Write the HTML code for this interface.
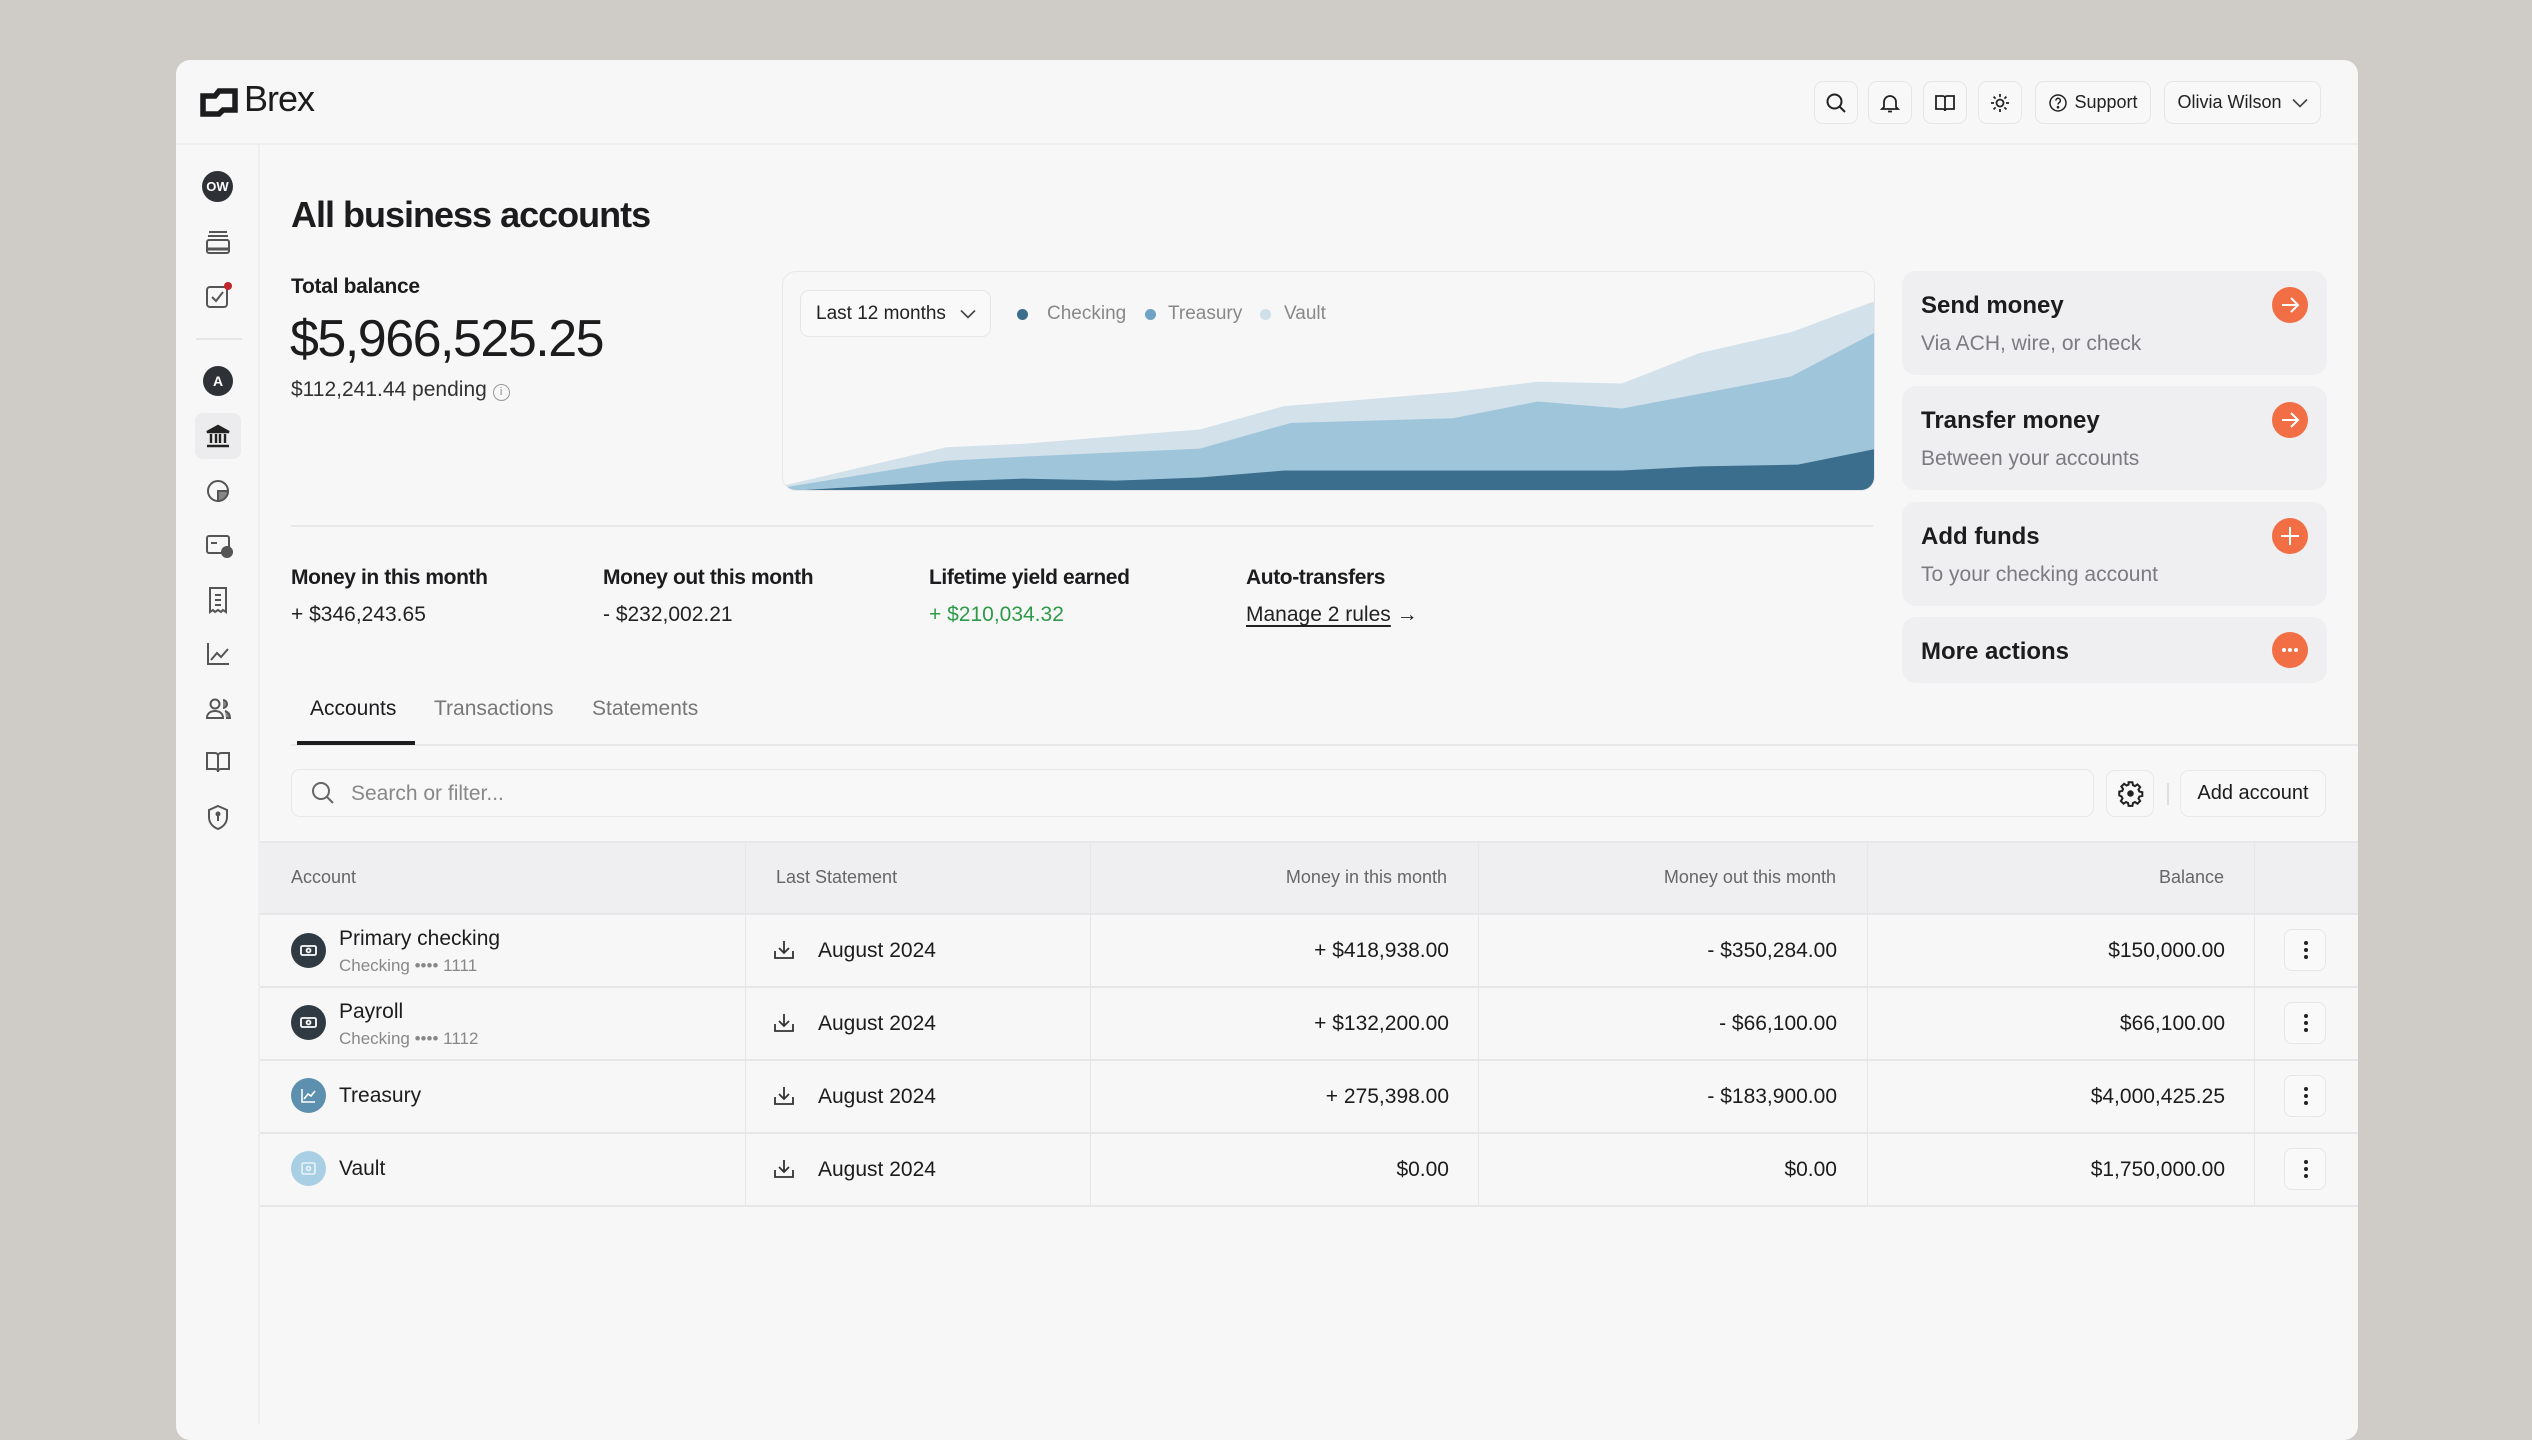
<!DOCTYPE html>
<html><head><meta charset="utf-8"><style>
*{margin:0;padding:0;box-sizing:border-box}
body{width:2532px;height:1424px;overflow:hidden;background:#cfcbc6;font-family:"Liberation Sans",sans-serif;color:#1c1c1e;position:relative}
.a{position:absolute}
.win{left:176px;top:60px;width:2182px;height:1380px;background:#f7f7f7;border-radius:14px;overflow:hidden}
.t{position:absolute;white-space:nowrap}
.hb{position:absolute;top:81px;height:43px;border:1.5px solid #e6e6e8;border-radius:9px;background:#f8f8f8;display:flex;align-items:center;justify-content:center;font-size:18px;color:#222}
.card{position:absolute;left:1902px;width:425px;background:#efeff1;border-radius:14px}
.card .h{position:absolute;left:19px;font-size:24px;font-weight:bold;color:#1c1c1e}
.card .s{position:absolute;left:19px;font-size:21px;color:#7b7b80}
.oc{position:absolute;left:2272px;width:36px;height:36px;border-radius:50%;background:#f26e45}
.col{position:absolute;top:841px;height:364px;border-left:1.5px solid #e7e7e9}
.row{position:absolute;left:260px;width:2098px;height:1.5px;background:#e7e7e9}
.rt{position:absolute;font-size:21px;color:#1c1c1e;white-space:nowrap}
.rr{position:absolute;font-size:21px;color:#1c1c1e;text-align:right;white-space:nowrap}
.keb{position:absolute;left:2284px;width:42px;height:42px;border:1.5px solid #e6e6e8;border-radius:8px;background:#f9f9f9}
.keb i{position:absolute;left:19px;width:4px;height:4px;border-radius:2px;background:#222}
.ic{position:absolute;left:291px;width:35px;height:35px;border-radius:50%}
.si{position:absolute;left:204px}
</style></head><body>
<div class="a win"></div>
<div class="a" style="left:176px;top:143px;width:2182px;height:2px;background:#efefef"></div>
<div class="a" style="left:258px;top:145px;width:2px;height:1279px;background:#efefef"></div>

<!-- logo -->
<svg class="a" style="left:199px;top:86px" width="40" height="32" viewBox="0 0 40 32"><path d="M4 10H16L20 5H36V24H24L20 28H4Z" fill="none" stroke="#1c1c1e" stroke-width="5.5" stroke-linejoin="miter"/></svg>
<div class="t" style="left:244px;top:78px;font-size:36px;font-weight:500;letter-spacing:-1px">Brex</div>

<div class="hb" style="left:1814px;width:44px"><svg width="24" height="24" viewBox="0 0 24 24" fill="none" stroke="#222" stroke-width="2"><circle cx="10.5" cy="10.5" r="7"/><path d="M16 16l5 5"/></svg></div>
<div class="hb" style="left:1868px;width:44px"><svg width="24" height="24" viewBox="0 0 24 24" fill="none" stroke="#222" stroke-width="1.8"><path d="M6 16V11a6 6 0 0112 0v5l2 2H4z"/><path d="M10 20.5h4"/></svg></div>
<div class="hb" style="left:1923px;width:44px"><svg width="24" height="24" viewBox="0 0 24 24" fill="none" stroke="#222" stroke-width="1.8"><path d="M3 5h7a2 2 0 012 2v13a2 2 0 00-2-2H3zM21 5h-7a2 2 0 00-2 2v13a2 2 0 012-2h7z"/></svg></div>
<div class="hb" style="left:1978px;width:44px"><svg width="24" height="24" viewBox="0 0 24 24" fill="none" stroke="#222" stroke-width="1.8"><circle cx="12" cy="12" r="3.5"/><path d="M12 3v3M12 18v3M3 12h3M18 12h3M5.6 5.6l2 2M16.4 16.4l2 2M5.6 18.4l2-2M16.4 7.6l2-2"/></svg></div>
<div class="hb" style="left:2035px;width:116px;gap:6px"><svg width="20" height="20" viewBox="0 0 20 20" fill="none" stroke="#222" stroke-width="1.5"><circle cx="10" cy="10" r="8"/><path d="M7.8 7.6a2.3 2.3 0 114 1.5c-.9.7-1.8 1.1-1.8 2.4"/><circle cx="10" cy="14.2" r=".6" fill="#222"/></svg>Support</div>
<div class="hb" style="left:2164px;width:157px;gap:10px">Olivia Wilson <svg width="16" height="10" viewBox="0 0 16 10" fill="none" stroke="#444" stroke-width="1.6"><path d="M1 1.5l7 7 7-7"/></svg></div>

<!-- sidebar -->
<div class="a" style="left:202px;top:171px;width:31px;height:31px;border-radius:50%;background:#2e3236;color:#fff;font-size:13px;font-weight:bold;text-align:center;line-height:31px">OW</div>
<svg class="si" style="top:229px" width="28" height="26" viewBox="0 0 28 26" fill="none" stroke="#555" stroke-width="2"><path d="M5 3h18M4 7h20"/><rect x="3" y="11" width="22" height="13" rx="2"/><path d="M3 20h22" stroke-width="3"/></svg>
<svg class="si" style="top:281px" width="30" height="30" viewBox="0 0 30 30" fill="none" stroke="#555" stroke-width="2"><rect x="3" y="6" width="20" height="20" rx="3"/><path d="M8 16l4 4 7-9"/><circle cx="24" cy="5" r="4" fill="#c0262b" stroke="none"/></svg>
<div class="a" style="left:196px;top:338px;width:46px;height:2px;background:#e6e6e6"></div>
<div class="a" style="left:203px;top:366px;width:30px;height:30px;border-radius:50%;background:#2e3236;color:#fff;font-size:14px;font-weight:bold;text-align:center;line-height:30px">A</div>
<div class="a" style="left:195px;top:413px;width:46px;height:46px;border-radius:8px;background:#ececee"></div>
<svg class="si" style="top:423px" width="28" height="26" viewBox="0 0 28 26" fill="none" stroke="#222" stroke-width="2.4"><path d="M3 9L14 3l11 6z" fill="#222"/><path d="M7 11v9M12 11v9M16 11v9M21 11v9M3 23h22" /></svg>
<svg class="si" style="top:477px" width="28" height="28" viewBox="0 0 28 28" fill="none" stroke="#555" stroke-width="2"><circle cx="14" cy="14" r="10"/><path d="M14 14h10a10 10 0 01-10 10z" fill="#888"/></svg>
<svg class="si" style="top:532px" width="30" height="28" viewBox="0 0 30 28" fill="none" stroke="#555" stroke-width="2"><rect x="3" y="4" width="22" height="17" rx="2"/><path d="M7 11h6"/><circle cx="23" cy="20" r="5" fill="#555"/></svg>
<svg class="si" style="top:585px" width="28" height="30" viewBox="0 0 28 30" fill="none" stroke="#555" stroke-width="2"><path d="M6 3h16v24l-3-2-2 2-3-2-3 2-2-2-3 2z"/><path d="M11 10h6M11 15h6M11 20h6"/></svg>
<svg class="si" style="top:640px" width="28" height="28" viewBox="0 0 28 28" fill="none" stroke="#555" stroke-width="2"><path d="M4 3v21h21"/><path d="M7 20l6-7 4 4 7-8"/></svg>
<svg class="si" style="top:695px" width="30" height="28" viewBox="0 0 30 28" fill="none" stroke="#555" stroke-width="2"><circle cx="11" cy="9" r="4.5"/><path d="M3 23c0-5 4-7 8-7s8 2 8 7z"/><path d="M19 5a4 4 0 010 8M21 16c3 1 5 3 5 7h-4" fill="#888"/></svg>
<svg class="si" style="top:749px" width="28" height="26" viewBox="0 0 28 26" fill="none" stroke="#555" stroke-width="2"><path d="M3 4h8a3 3 0 013 3v16a3 3 0 00-3-3H3zM25 4h-8a3 3 0 00-3 3v16a3 3 0 013-3h8z"/></svg>
<svg class="si" style="top:803px" width="28" height="28" viewBox="0 0 28 28" fill="none" stroke="#555" stroke-width="2"><path d="M14 3l9 4v7c0 6-4 10-9 12-5-2-9-6-9-12V7z"/><path d="M14 11v7"/><circle cx="14" cy="11" r="1.5" fill="#555"/></svg>

<!-- title -->
<div class="t" style="left:291px;top:194px;font-size:36px;font-weight:bold;letter-spacing:-1px">All business accounts</div>
<div class="t" style="left:291px;top:275px;font-size:21px;font-weight:bold;letter-spacing:-0.3px">Total balance</div>
<div class="t" style="left:290px;top:309px;font-size:52px;font-weight:500;letter-spacing:-1.5px">$5,966,525.25</div>
<div class="t" style="left:291px;top:378px;font-size:21px;color:#333">$112,241.44 pending <span style="display:inline-block;width:17px;height:17px;border:1.5px solid #999;border-radius:50%;font-size:11px;color:#888;text-align:center;line-height:14px;vertical-align:1px">i</span></div>

<!-- chart card -->
<div class="a" style="left:782px;top:271px;width:1093px;height:220px;border:1.5px solid #e8e8ea;border-radius:14px;background:#f7f7f7;overflow:hidden">
<svg class="a" style="left:-2px;top:-6px" width="1093" height="230" viewBox="5 18 1553 660" preserveAspectRatio="none">
<path d="M5 650L240 538L350 528L600 487L720 420L960 380L1080 350L1200 355L1310 268L1440 208L1560 118L1560 680L5 680Z" fill="#d3e1ea"/>
<path d="M5 655L240 577L350 565L600 542L730 468L960 455L1080 407L1200 427L1310 385L1440 335L1560 208L1560 680L5 680Z" fill="#9fc5db"/>
<path d="M5 665L240 636L350 628L480 634L600 625L720 605L1200 605L1310 593L1450 588L1560 543L1560 680L5 680Z" fill="#3b6e8c"/>
</svg>
</div>
<div class="a" style="left:800px;top:290px;width:191px;height:47px;border:1.5px solid #e6e6e8;border-radius:9px;background:#f9f9f9"></div>
<div class="t" style="left:816px;top:303px;font-size:19px;color:#222">Last 12 months</div>
<svg class="a" style="left:960px;top:309px" width="16" height="10" viewBox="0 0 16 10" fill="none" stroke="#444" stroke-width="1.6"><path d="M1 1.5l7 7 7-7"/></svg>
<div class="a" style="left:1017px;top:309px;width:11px;height:11px;border-radius:50%;background:#3b6e8c"></div>
<div class="t" style="left:1047px;top:303px;font-size:19px;color:#888">Checking</div>
<div class="a" style="left:1145px;top:309px;width:11px;height:11px;border-radius:50%;background:#6fa3c3"></div>
<div class="t" style="left:1168px;top:303px;font-size:19px;color:#888">Treasury</div>
<div class="a" style="left:1260px;top:309px;width:11px;height:11px;border-radius:50%;background:#cfe0ea"></div>
<div class="t" style="left:1284px;top:303px;font-size:19px;color:#888">Vault</div>

<!-- cards -->
<div class="card" style="top:271px;height:104px"><div class="h" style="top:21px">Send money</div><div class="s" style="top:61px">Via ACH, wire, or check</div></div>
<div class="card" style="top:386px;height:104px"><div class="h" style="top:21px">Transfer money</div><div class="s" style="top:61px">Between your accounts</div></div>
<div class="card" style="top:502px;height:104px"><div class="h" style="top:21px">Add funds</div><div class="s" style="top:61px">To your checking account</div></div>
<div class="card" style="top:617px;height:66px"><div class="h" style="top:21px">More actions</div></div>
<div class="oc" style="top:287px"><svg width="36" height="36" viewBox="0 0 36 36" fill="none" stroke="#fff" stroke-width="2"><path d="M10 18h15M19 11l7 7-7 7"/></svg></div>
<div class="oc" style="top:402px"><svg width="36" height="36" viewBox="0 0 36 36" fill="none" stroke="#fff" stroke-width="2"><path d="M10 18h15M19 11l7 7-7 7"/></svg></div>
<div class="oc" style="top:518px"><svg width="36" height="36" viewBox="0 0 36 36" fill="none" stroke="#fff" stroke-width="2"><path d="M9 18h18M18 9v18"/></svg></div>
<div class="oc" style="top:632px"><svg width="36" height="36" viewBox="0 0 36 36" fill="#fff"><circle cx="12" cy="18" r="2"/><circle cx="18" cy="18" r="2"/><circle cx="24" cy="18" r="2"/></svg></div>

<div class="a" style="left:291px;top:525px;width:1582px;height:1.5px;background:#e8e8ea"></div>

<!-- stats -->
<div class="t" style="left:291px;top:566px;font-size:21px;font-weight:bold;letter-spacing:-0.4px">Money in this month</div>
<div class="t" style="left:291px;top:603px;font-size:21px;color:#222">+ $346,243.65</div>
<div class="t" style="left:603px;top:566px;font-size:21px;font-weight:bold;letter-spacing:-0.4px">Money out this month</div>
<div class="t" style="left:603px;top:603px;font-size:21px;color:#222">- $232,002.21</div>
<div class="t" style="left:929px;top:566px;font-size:21px;font-weight:bold;letter-spacing:-0.4px">Lifetime yield earned</div>
<div class="t" style="left:929px;top:603px;font-size:21px;color:#2e9a4a">+ $210,034.32</div>
<div class="t" style="left:1246px;top:566px;font-size:21px;font-weight:bold;letter-spacing:-0.4px">Auto-transfers</div>
<div class="t" style="left:1246px;top:603px;font-size:21px;color:#222"><span style="text-decoration:underline;text-underline-offset:4px">Manage 2 rules</span> →</div>

<!-- tabs -->
<div class="t" style="left:310px;top:697px;font-size:21px;color:#1c1c1e">Accounts</div>
<div class="t" style="left:434px;top:697px;font-size:21px;color:#777">Transactions</div>
<div class="t" style="left:592px;top:697px;font-size:21px;color:#777">Statements</div>
<div class="a" style="left:291px;top:744px;width:2067px;height:1.5px;background:#e8e8ea"></div>
<div class="a" style="left:297px;top:741px;width:118px;height:4px;background:#1c1c1e"></div>

<!-- search -->
<div class="a" style="left:291px;top:769px;width:1803px;height:48px;border:1.5px solid #e8e8ea;border-radius:9px;background:#f8f8f8"></div>
<svg class="a" style="left:310px;top:780px" width="26" height="26" viewBox="0 0 26 26" fill="none" stroke="#666" stroke-width="2"><circle cx="11" cy="11" r="8"/><path d="M17 17l6 6"/></svg>
<div class="t" style="left:351px;top:782px;font-size:21px;color:#888">Search or filter...</div>
<div class="a" style="left:2106px;top:770px;width:48px;height:47px;border:1.5px solid #e8e8ea;border-radius:9px;background:#f8f8f8"></div>
<svg class="a" style="left:2117px;top:780px" width="27" height="27" viewBox="0 0 24 24" fill="none" stroke="#222" stroke-width="1.8"><path d="M10.3 2h3.4l.5 2.6 1.8.8 2.2-1.5 2.4 2.4-1.5 2.2.8 1.8 2.6.5v3.4l-2.6.5-.8 1.8 1.5 2.2-2.4 2.4-2.2-1.5-1.8.8-.5 2.6h-3.4l-.5-2.6-1.8-.8-2.2 1.5-2.4-2.4 1.5-2.2-.8-1.8L2 13.7v-3.4l2.6-.5.8-1.8-1.5-2.2 2.4-2.4 2.2 1.5 1.8-.8z"/><circle cx="12" cy="12" r="2" fill="#222"/></svg>
<div class="a" style="left:2167px;top:783px;width:2px;height:22px;background:#e0e0e0"></div>
<div class="a" style="left:2180px;top:770px;width:146px;height:47px;border:1.5px solid #e8e8ea;border-radius:9px;background:#f8f8f8;font-size:20px;text-align:center;line-height:44px">Add account</div>

<!-- table -->
<div class="a" style="left:260px;top:841px;width:2098px;height:73px;background:#efeff1"></div>
<div class="row" style="top:841px"></div>
<div class="row" style="top:913px"></div>
<div class="row" style="top:986px"></div>
<div class="row" style="top:1059px"></div>
<div class="row" style="top:1132px"></div>
<div class="row" style="top:1205px"></div>
<div class="col" style="left:745px"></div>
<div class="col" style="left:1090px"></div>
<div class="col" style="left:1478px"></div>
<div class="col" style="left:1867px"></div>
<div class="col" style="left:2254px"></div>
<div class="t" style="left:291px;top:867px;font-size:18px;color:#666">Account</div>
<div class="t" style="left:776px;top:867px;font-size:18px;color:#666">Last Statement</div>
<div class="rr" style="right:1085px;top:867px;font-size:18px;color:#666">Money in this month</div>
<div class="rr" style="right:696px;top:867px;font-size:18px;color:#666">Money out this month</div>
<div class="rr" style="right:308px;top:867px;font-size:18px;color:#666">Balance</div>

<div class="ic" style="top:933px;background:#2f3a42"><svg width="35" height="35" viewBox="0 0 35 35" fill="none" stroke="#fff" stroke-width="1.8"><rect x="10" y="13" width="15" height="9" rx="1.5"/><circle cx="17.5" cy="17.5" r="2"/></svg></div>
<div class="rt" style="left:339px;top:927px">Primary checking</div>
<div class="rt" style="left:339px;top:956px;font-size:17px;color:#888">Checking •••• 1111</div>
<div class="ic" style="top:1005px;background:#2f3a42"><svg width="35" height="35" viewBox="0 0 35 35" fill="none" stroke="#fff" stroke-width="1.8"><rect x="10" y="13" width="15" height="9" rx="1.5"/><circle cx="17.5" cy="17.5" r="2"/></svg></div>
<div class="rt" style="left:339px;top:1000px">Payroll</div>
<div class="rt" style="left:339px;top:1029px;font-size:17px;color:#888">Checking •••• 1112</div>
<div class="ic" style="top:1078px;background:#5d8fae"><svg width="35" height="35" viewBox="0 0 35 35" fill="none" stroke="#fff" stroke-width="1.6"><path d="M11 11v13h13M13 21l4-5 3 2 4-5"/></svg></div>
<div class="rt" style="left:339px;top:1084px">Treasury</div>
<div class="ic" style="top:1151px;background:#a8cfe3"><svg width="35" height="35" viewBox="0 0 35 35" fill="none" stroke="#eaf4f9" stroke-width="1.6"><rect x="11" y="12" width="13" height="11" rx="1.5"/><circle cx="17.5" cy="17.5" r="2"/></svg></div>
<div class="rt" style="left:339px;top:1157px">Vault</div>

<svg class="a" style="left:773px;top:939px" width="22" height="22" viewBox="0 0 22 22" fill="none" stroke="#333" stroke-width="1.8"><path d="M2 12v7h18v-7M11 2v12M6 9l5 5 5-5"/></svg>
<svg class="a" style="left:773px;top:1012px" width="22" height="22" viewBox="0 0 22 22" fill="none" stroke="#333" stroke-width="1.8"><path d="M2 12v7h18v-7M11 2v12M6 9l5 5 5-5"/></svg>
<svg class="a" style="left:773px;top:1085px" width="22" height="22" viewBox="0 0 22 22" fill="none" stroke="#333" stroke-width="1.8"><path d="M2 12v7h18v-7M11 2v12M6 9l5 5 5-5"/></svg>
<svg class="a" style="left:773px;top:1158px" width="22" height="22" viewBox="0 0 22 22" fill="none" stroke="#333" stroke-width="1.8"><path d="M2 12v7h18v-7M11 2v12M6 9l5 5 5-5"/></svg>
<div class="rt" style="left:818px;top:939px">August 2024</div>
<div class="rt" style="left:818px;top:1012px">August 2024</div>
<div class="rt" style="left:818px;top:1085px">August 2024</div>
<div class="rt" style="left:818px;top:1158px">August 2024</div>

<div class="rr" style="right:1083px;top:939px">+ $418,938.00</div>
<div class="rr" style="right:1083px;top:1012px">+ $132,200.00</div>
<div class="rr" style="right:1083px;top:1085px">+ 275,398.00</div>
<div class="rr" style="right:1083px;top:1158px">$0.00</div>
<div class="rr" style="right:695px;top:939px">- $350,284.00</div>
<div class="rr" style="right:695px;top:1012px">- $66,100.00</div>
<div class="rr" style="right:695px;top:1085px">- $183,900.00</div>
<div class="rr" style="right:695px;top:1158px">$0.00</div>
<div class="rr" style="right:307px;top:939px">$150,000.00</div>
<div class="rr" style="right:307px;top:1012px">$66,100.00</div>
<div class="rr" style="right:307px;top:1085px">$4,000,425.25</div>
<div class="rr" style="right:307px;top:1158px">$1,750,000.00</div>

<div class="keb" style="top:929px"><i style="top:11px"></i><i style="top:18px"></i><i style="top:25px"></i></div>
<div class="keb" style="top:1002px"><i style="top:11px"></i><i style="top:18px"></i><i style="top:25px"></i></div>
<div class="keb" style="top:1075px"><i style="top:11px"></i><i style="top:18px"></i><i style="top:25px"></i></div>
<div class="keb" style="top:1148px"><i style="top:11px"></i><i style="top:18px"></i><i style="top:25px"></i></div>
</body></html>
